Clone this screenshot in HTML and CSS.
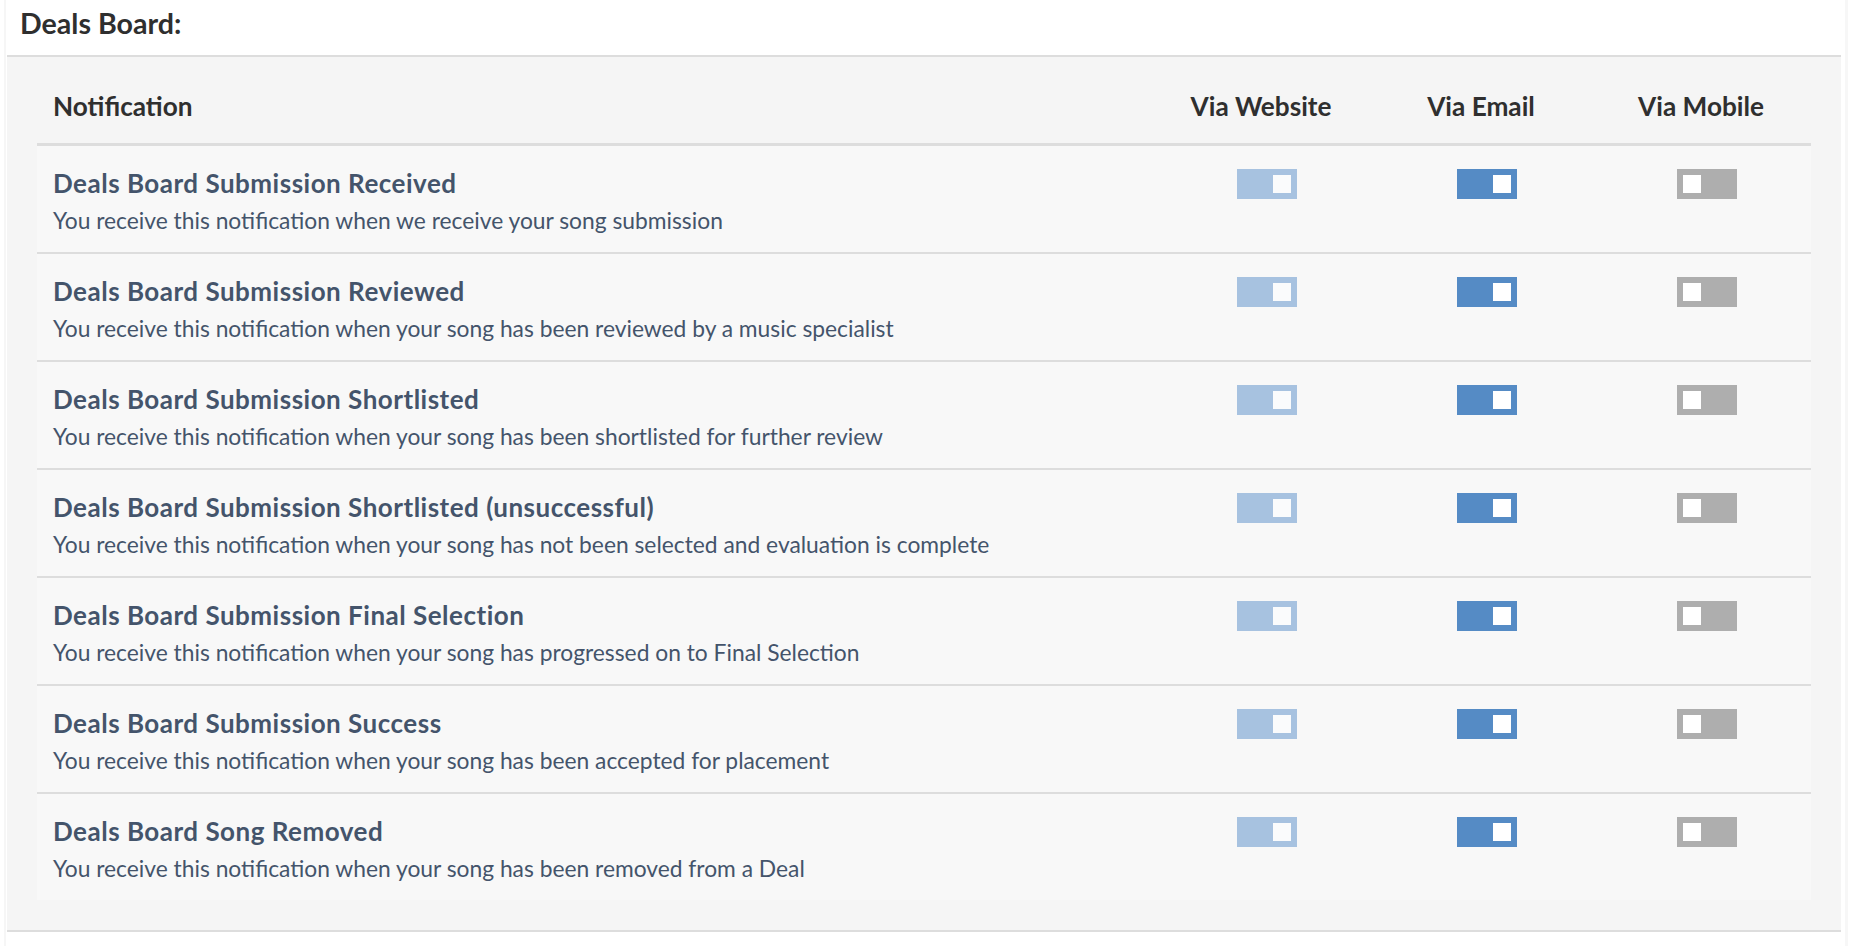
FILE: index.html
```html
<!DOCTYPE html>
<html lang="en">
<head>
<meta charset="utf-8">
<title>Deals Board Notifications</title>
<link rel="stylesheet" href="styles.css">
</head>
<body>
<div class="page">
  <h2 class="section-title">Deals Board:</h2>
  <div class="panel">
    <div class="grid head">
      <div class="head-name">Notification</div>
      <div class="head-col">Via Website</div>
      <div class="head-col">Via Email</div>
      <div class="head-col">Via Mobile</div>
    </div>

    <div class="grid row">
      <div class="info">
        <div class="title">Deals Board Submission Received</div>
        <div class="desc">You receive this notification when we receive your song submission</div>
      </div>
      <div class="cell"><span class="toggle web on"><span class="knob"></span></span></div>
      <div class="cell"><span class="toggle email on"><span class="knob"></span></span></div>
      <div class="cell"><span class="toggle mobile"><span class="knob"></span></span></div>
    </div>

    <div class="grid row">
      <div class="info">
        <div class="title">Deals Board Submission Reviewed</div>
        <div class="desc">You receive this notification when your song has been reviewed by a music specialist</div>
      </div>
      <div class="cell"><span class="toggle web on"><span class="knob"></span></span></div>
      <div class="cell"><span class="toggle email on"><span class="knob"></span></span></div>
      <div class="cell"><span class="toggle mobile"><span class="knob"></span></span></div>
    </div>

    <div class="grid row">
      <div class="info">
        <div class="title">Deals Board Submission Shortlisted</div>
        <div class="desc">You receive this notification when your song has been shortlisted for further review</div>
      </div>
      <div class="cell"><span class="toggle web on"><span class="knob"></span></span></div>
      <div class="cell"><span class="toggle email on"><span class="knob"></span></span></div>
      <div class="cell"><span class="toggle mobile"><span class="knob"></span></span></div>
    </div>

    <div class="grid row">
      <div class="info">
        <div class="title">Deals Board Submission Shortlisted (unsuccessful)</div>
        <div class="desc">You receive this notification when your song has not been selected and evaluation is complete</div>
      </div>
      <div class="cell"><span class="toggle web on"><span class="knob"></span></span></div>
      <div class="cell"><span class="toggle email on"><span class="knob"></span></span></div>
      <div class="cell"><span class="toggle mobile"><span class="knob"></span></span></div>
    </div>

    <div class="grid row">
      <div class="info">
        <div class="title">Deals Board Submission Final Selection</div>
        <div class="desc">You receive this notification when your song has progressed on to Final Selection</div>
      </div>
      <div class="cell"><span class="toggle web on"><span class="knob"></span></span></div>
      <div class="cell"><span class="toggle email on"><span class="knob"></span></span></div>
      <div class="cell"><span class="toggle mobile"><span class="knob"></span></span></div>
    </div>

    <div class="grid row">
      <div class="info">
        <div class="title">Deals Board Submission Success</div>
        <div class="desc">You receive this notification when your song has been accepted for placement</div>
      </div>
      <div class="cell"><span class="toggle web on"><span class="knob"></span></span></div>
      <div class="cell"><span class="toggle email on"><span class="knob"></span></span></div>
      <div class="cell"><span class="toggle mobile"><span class="knob"></span></span></div>
    </div>

    <div class="grid row">
      <div class="info">
        <div class="title">Deals Board Song Removed</div>
        <div class="desc">You receive this notification when your song has been removed from a Deal</div>
      </div>
      <div class="cell"><span class="toggle web on"><span class="knob"></span></span></div>
      <div class="cell"><span class="toggle email on"><span class="knob"></span></span></div>
      <div class="cell"><span class="toggle mobile"><span class="knob"></span></span></div>
    </div>
  </div>
</div>
</body>
</html>
```

FILE: styles.css
```css
html, body {
  margin: 0;
  padding: 0;
  background: #ffffff;
}

body {
  font-family: "Lato", "Open Sans", sans-serif;
  color: #333333;
}

.page {
  margin-left: 4px;
  width: 1844px;
  min-height: 946px;
  box-sizing: border-box;
  border-left: 2px solid #f6f6f6;
  border-right: 3px solid #f7f7f7;
  padding: 0 4px 0 1px;
}

.section-title {
  margin: 0;
  padding: 6px 13px 14px;
  font-size: 28.6px;
  line-height: 35px;
  font-weight: 700;
  color: #2f2f2f;
}

.panel {
  background: #f5f5f5;
  border-top: 2px solid #dddddd;
  border-bottom: 2px solid #dddddd;
  padding: 30px 30px 30px;
}

.grid {
  display: grid;
  grid-template-columns: 1fr 220px 220px 220px;
}

.head {
  border-bottom: 3px solid #dddddd;
  padding: 3px 0 21px;
  font-size: 26.2px;
  line-height: 32px;
  font-weight: 700;
  color: #2f2f2f;
}

.head-name {
  padding-left: 16px;
}

.head-col {
  text-align: center;
}

.row {
  background: #f8f8f8;
  height: 106px;
  border-bottom: 2px solid #dddddd;
}

.row:last-child {
  border-bottom: none;
}

.info {
  padding: 22px 0 0 16px;
  color: #44546b;
}

.title {
  font-size: 26px;
  line-height: 30px;
  font-weight: 700;
  letter-spacing: 0.5px;
}

.desc {
  margin-top: 7px;
  font-size: 22.8px;
  line-height: 30px;
  font-weight: 400;
}

.cell {
  text-align: center;
  padding-top: 23px;
}

.toggle {
  display: inline-flex;
  box-sizing: border-box;
  width: 60px;
  height: 30px;
  padding: 6px;
  margin-left: 12px;
  justify-content: flex-start;
  vertical-align: top;
}

.toggle.on {
  justify-content: flex-end;
}

.knob {
  display: block;
  width: 18px;
  height: 18px;
  background: #ffffff;
}

.toggle.web {
  background: #a7c2e0;
}

.toggle.web .knob {
  background: #fafbfc;
}

.toggle.email {
  background: #558bc5;
}

.toggle.mobile {
  background: #aeaeae;
}
```
